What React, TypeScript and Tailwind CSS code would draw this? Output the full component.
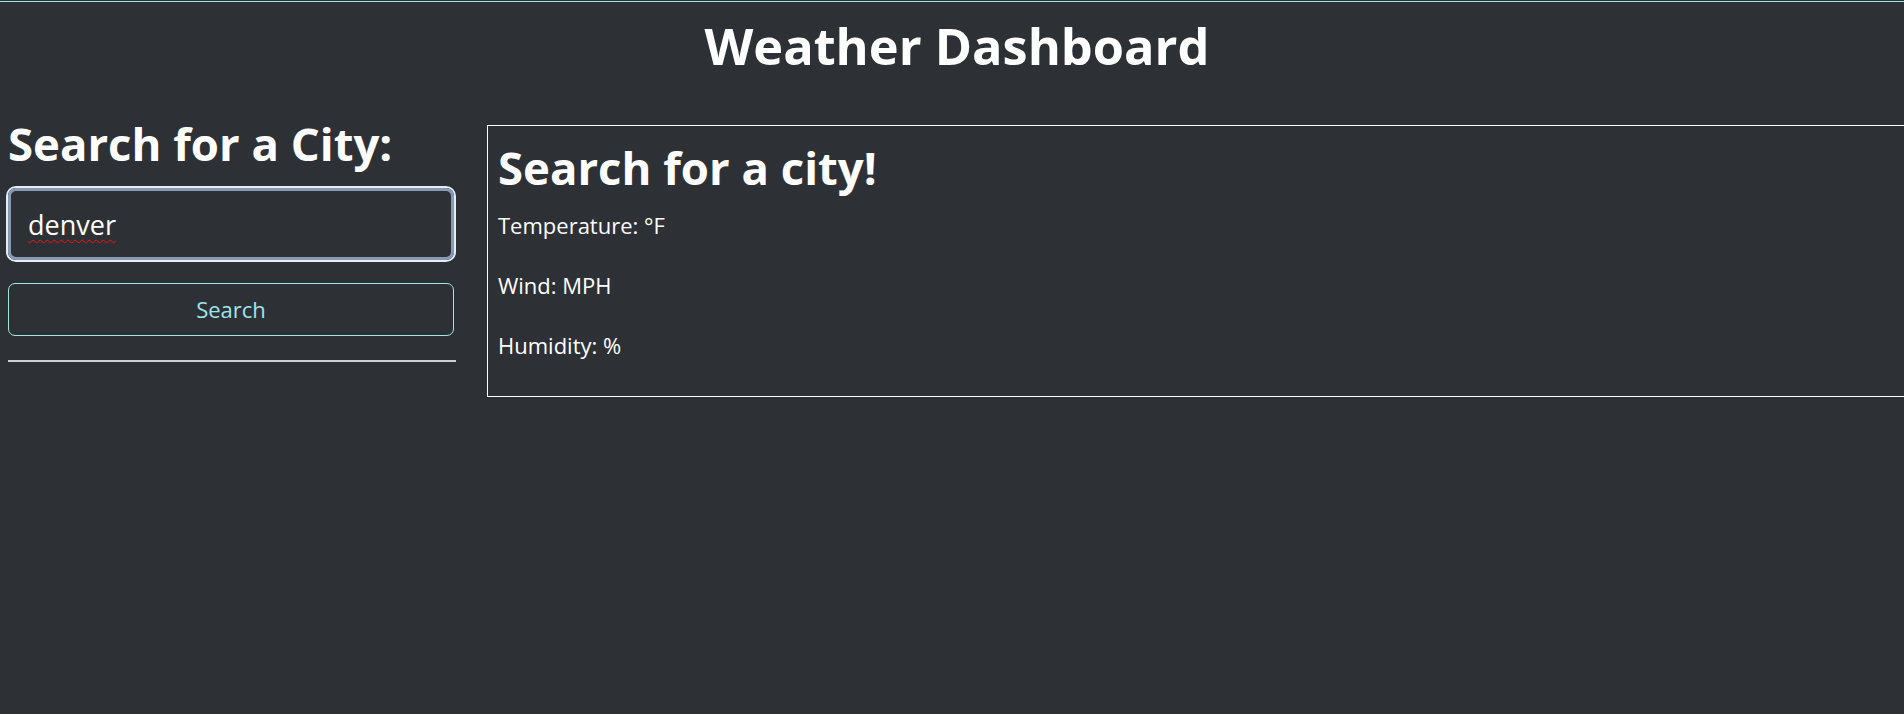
import React from "react";

export default function App() {
  return (
    <div
      className="w-full min-h-[714px] overflow-hidden bg-[#2d3136] text-white"
      style={{ fontFamily: '"Open Sans", "Noto Sans", Arial, sans-serif' }}
    >
      <div className="mt-px h-px w-full bg-[#a3e2dc]" />
      <h1 className="mt-[13px] pl-[10px] text-center text-[50.5px] font-bold leading-[61px]">
        Weather Dashboard
      </h1>
      <div className="mt-[39px] flex items-start">
        <aside className="ml-[8px] flex w-[448px] shrink-0 flex-col">
          <h2 className="text-[45.5px] font-bold leading-[56px]">Search for a City:</h2>
          <input
            type="text"
            defaultValue="denver"
            spellCheck={false}
            className="mt-[17px] h-[72px] w-[446px] rounded-[8px] border-[3px] border-[#8799b6] bg-transparent px-[17px] text-[27px] text-white underline decoration-[#ff1010] decoration-wavy decoration-1 underline-offset-[4px] shadow-[0_0_0_2px_#e6ecf3] outline-none"
          />
          <button
            type="button"
            className="mt-[23px] h-[53px] w-[446px] rounded-[7px] border border-[#a6e6e0] bg-transparent text-[22px] leading-[33px] text-[#a0e4ea]"
          >
            Search
          </button>
          <div className="mt-[24px] h-[2px] w-[448px] bg-[#d0d0d0]" />
        </aside>
        <section className="ml-[31px] mt-[10px] w-[1500px] shrink-0 border border-white px-[10px] pb-[34px] pt-[13px]">
          <h2 className="text-[45.5px] font-bold leading-[56px]">Search for a city!</h2>
          <div className="mt-[14px] flex flex-col gap-[27px] text-[22px] leading-[33px]">
            <p>Temperature: °F</p>
            <p>Wind: MPH</p>
            <p>Humidity: %</p>
          </div>
        </section>
      </div>
    </div>
  );
}
